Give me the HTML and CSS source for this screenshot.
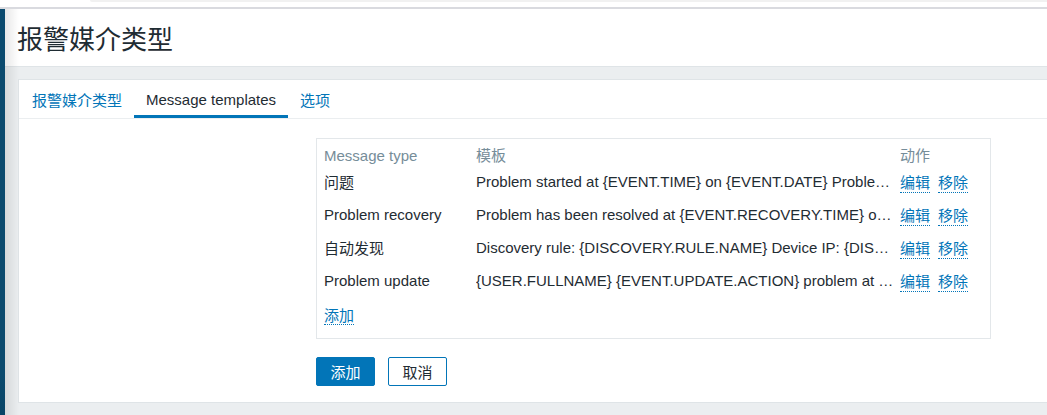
FILE: index.html
```html
<!DOCTYPE html>
<html lang="zh">
<head>
  <meta charset="UTF-8">
  <title>报警媒介类型</title>
  <link rel="stylesheet" href="styles.css">
</head>
<body>
<div class="topbar"><div class="topbar-strip"></div></div>
<div class="layout">
  <div class="sidebar"></div>
  <div class="main">
    <header class="page-header">
      <h1>报警媒介类型</h1>
    </header>
    <div class="content">
      <div class="panel">
        <ul class="tabs">
          <li><a href="#">报警媒介类型</a></li>
          <li class="active"><a href="#">Message templates</a></li>
          <li><a href="#">选项</a></li>
        </ul>
        <div class="form">
          <div class="table-box">
            <table class="templates">
              <colgroup>
                <col class="col-type">
                <col class="col-template">
                <col class="col-action">
              </colgroup>
              <thead>
                <tr>
                  <th>Message type</th>
                  <th>模板</th>
                  <th>动作</th>
                </tr>
              </thead>
              <tbody>
                <tr>
                  <td>问题</td>
                  <td><div class="clip">Problem started at {EVENT.TIME} on {EVENT.DATE} Proble…</div></td>
                  <td><div class="actions"><a href="#">编辑</a><a href="#">移除</a></div></td>
                </tr>
                <tr>
                  <td>Problem recovery</td>
                  <td><div class="clip">Problem has been resolved at {EVENT.RECOVERY.TIME} o…</div></td>
                  <td><div class="actions"><a href="#">编辑</a><a href="#">移除</a></div></td>
                </tr>
                <tr>
                  <td>自动发现</td>
                  <td><div class="clip">Discovery rule: {DISCOVERY.RULE.NAME} Device IP: {DIS…</div></td>
                  <td><div class="actions"><a href="#">编辑</a><a href="#">移除</a></div></td>
                </tr>
                <tr>
                  <td>Problem update</td>
                  <td><div class="clip">{USER.FULLNAME} {EVENT.UPDATE.ACTION} problem at …</div></td>
                  <td><div class="actions"><a href="#">编辑</a><a href="#">移除</a></div></td>
                </tr>
                <tr class="add-row">
                  <td colspan="3"><a href="#" class="link">添加</a></td>
                </tr>
              </tbody>
            </table>
          </div>
          <div class="buttons">
            <button class="btn-primary">添加</button>
            <button class="btn-alt">取消</button>
          </div>
        </div>
      </div>
    </div>
  </div>
</div>
</body>
</html>
```
FILE: styles.css
```css
html, body {
  margin: 0;
  height: 100%;
  overflow: hidden;
}
body {
  font-family: "Liberation Sans", Arial, "Noto Sans CJK SC", sans-serif;
  font-size: 15px;
  color: #1f2c33;
  background-color: #ebeef0;
}
.topbar {
  height: 7px;
  background-color: #fff;
  border-bottom: 2px solid #d9dadf;
}
.topbar-strip {
  margin-left: 90px;
  height: 2px;
  background-color: #f1f1f1;
  border-radius: 0 0 0 4px;
}
.layout {
  display: flex;
  height: calc(100% - 9px);
}
.sidebar {
  width: 5px;
  flex-shrink: 0;
  background: linear-gradient(#0b4a6e 0%, #0b4a6e 90%, #094466 100%);
}
.main {
  flex: 1;
  display: flex;
  flex-direction: column;
  position: relative;
}
.main::before {
  content: "";
  position: absolute;
  top: 0;
  bottom: 0;
  left: 0;
  width: 14px;
  background: linear-gradient(to right, rgba(0, 0, 0, 0.09), rgba(0, 0, 0, 0));
  pointer-events: none;
}
.page-header {
  height: 57px;
  background-color: #fff;
  border-bottom: 1px solid #dfe4e7;
  display: flex;
  align-items: center;
  padding-left: 12px;
}
.page-header h1 {
  margin: 0;
  font-weight: normal;
  font-size: 26px;
  color: #1f2c33;
}
.content {
  padding: 12px 0 0 13px;
}
.panel {
  background-color: #fff;
  border: 1px solid #dfe4e7;
  border-right: none;
  height: 322px;
}
.tabs {
  list-style: none;
  margin: 0;
  padding: 0 0 0 1px;
  display: flex;
  height: 38px;
  border-bottom: 1px solid #ebeef0;
}
.tabs li {
  padding: 0 12px;
  display: flex;
  align-items: center;
}
.tabs a {
  text-decoration: none;
  color: #0275b8;
}
.tabs li.active {
  box-shadow: inset 0 -3px 0 #0275b8;
}
.tabs li.active a {
  color: #1f2c33;
}
.form {
  padding: 19px 0 0 297px;
}
.table-box {
  width: 675px;
  box-sizing: border-box;
  border: 1px solid #e3e7ea;
  padding: 0 7px 6px 7px;
}
.templates {
  width: 100%;
  table-layout: fixed;
  border-collapse: collapse;
}
.col-type {
  width: 152px;
}
.col-template {
  width: 424px;
}
.templates th {
  text-align: left;
  font-weight: normal;
  color: #768d99;
  padding: 8px 0 0 0;
  line-height: 18px;
}
.templates td {
  height: 33px;
  padding: 0;
  white-space: nowrap;
}
.templates .add-row td {
  height: 35px;
}
.clip {
  overflow: hidden;
  text-overflow: ellipsis;
  white-space: nowrap;
  padding-right: 4px;
}
.actions {
  display: flex;
  gap: 8px;
}
.actions a,
.link {
  color: #0275b8;
  text-decoration: none;
  border-bottom: 1px dotted #0275b8;
}
.buttons {
  display: flex;
  gap: 13px;
  margin-top: 18px;
}
.buttons button {
  width: 59px;
  height: 29px;
  border-radius: 2px;
  font-family: "Liberation Sans", Arial, "Noto Sans CJK SC", sans-serif;
  font-size: 15px;
  cursor: pointer;
}
.btn-primary {
  background-color: #0275b8;
  border: 1px solid #0275b8;
  color: #fff;
}
.btn-alt {
  background-color: #fff;
  border: 1px solid #0275b8;
  color: #1f2c33;
}
```
